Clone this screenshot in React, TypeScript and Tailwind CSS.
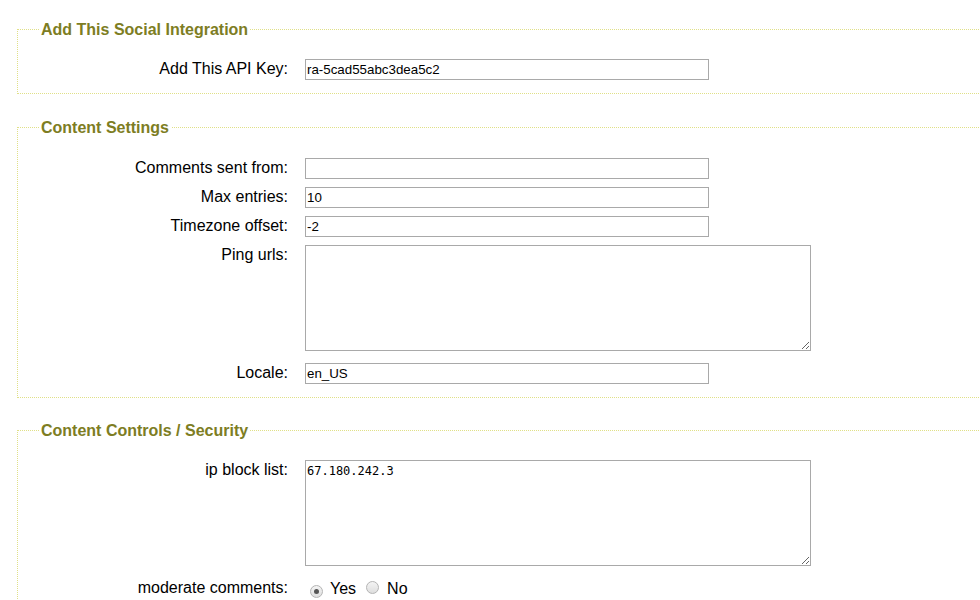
import React from "react";

const Row = ({ label, children, className = "" }: { label: string; children: React.ReactNode; className?: string }) => (
  <div className={`flex items-start ${className}`}>
    <div className="w-[270px] shrink-0 text-right text-[16px] leading-[19px] text-black">{label}</div>
    <div className="ml-[17px]">{children}</div>
  </div>
);

const Input = ({ value = "" }: { value?: string }) => (
  <input
    readOnly
    value={value}
    className="block w-[404px] h-[21px] border border-[#a9a9a9] bg-white pl-px text-[13.33px] text-black outline-none font-['Liberation_Sans',Arial,sans-serif]"
  />
);

const Area = ({ value = "" }: { value?: string }) => (
  <textarea
    readOnly
    value={value}
    className="block w-[506px] h-[106px] border border-[#a9a9a9] bg-white px-px py-[3px] text-[12px] leading-[15px] text-black outline-none resize font-['DejaVu_Sans_Mono',monospace]"
  />
);

const Section = ({ title, children, className = "" }: { title: string; children: React.ReactNode; className?: string }) => (
  <fieldset className={`ml-[17px] w-[1000px] border border-dotted border-[#e0e088] pt-[21px] pb-[13px] ${className}`}>
    <legend className="ml-[21px] px-[2px] text-[16px] leading-[17px] font-bold text-[#7d7d23]">{title}</legend>
    {children}
  </fieldset>
);

const Radio = ({ checked }: { checked?: boolean }) => (
  <span className="inline-flex items-center justify-center w-[13px] h-[13px] rounded-full border border-[#b4b4b4] bg-gradient-to-b from-[#f4f4f4] to-[#dedede]">
    {checked && <span className="w-[5px] h-[5px] rounded-full bg-[#555]" />}
  </span>
);

export default function App() {
  return (
    <div className="w-[980px] h-[600px] overflow-hidden bg-white pt-[21px] font-['Liberation_Sans',Arial,sans-serif]">
      <Section title="Add This Social Integration">
        <Row label="Add This API Key:">
          <Input value="ra-5cad55abc3dea5c2" />
        </Row>
      </Section>

      <Section title="Content Settings" className="mt-[25px]">
        <Row label="Comments sent from:" className="mt-px">
          <Input />
        </Row>
        <Row label="Max entries:" className="mt-[8px]">
          <Input value="10" />
        </Row>
        <Row label="Timezone offset:" className="mt-[8px]">
          <Input value="-2" />
        </Row>
        <Row label="Ping urls:" className="mt-[8px]">
          <Area />
        </Row>
        <Row label="Locale:" className="mt-[12px]">
          <Input value="en_US" />
        </Row>
      </Section>

      <Section title="Content Controls / Security" className="mt-[24px]">
        <Row label="ip block list:">
          <Area value="67.180.242.3" />
        </Row>
        <Row label="moderate comments:" className="mt-[12px]">
          <div className="flex items-center h-[21px] text-[16px] text-black">
            <span className="ml-[5px]"><Radio checked /></span>
            <span className="ml-[7px]">Yes</span>
            <span className="ml-[10px]"><Radio /></span>
            <span className="ml-[8px]">No</span>
          </div>
        </Row>
      </Section>
    </div>
  );
}
